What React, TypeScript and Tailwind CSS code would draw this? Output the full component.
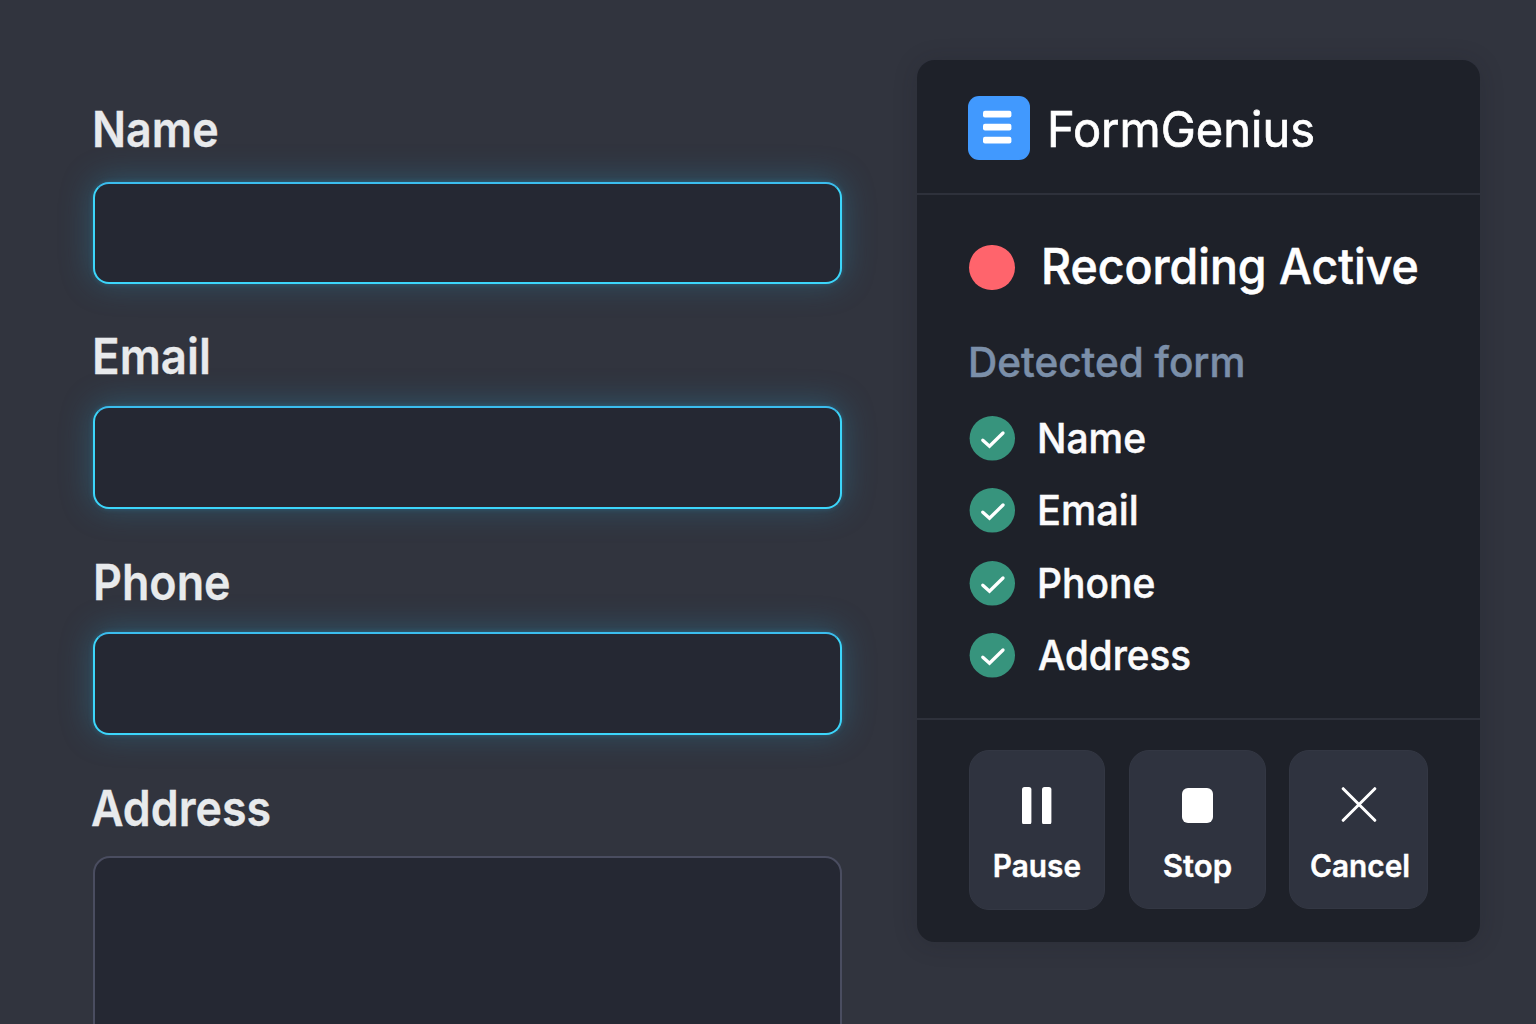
import type { ReactNode } from 'react';

type LabelProps = { children: string; className: string };

function FieldLabel({ children, className }: LabelProps) {
  return (
    <div
      className={`h-[60px] w-max shrink-0 origin-left text-[49px] leading-[60px] font-semibold text-[#e8eaec] [-webkit-text-stroke:0.3px_#e8eaec] ${className}`}
    >
      {children}
    </div>
  );
}

function ActiveInput({ className }: { className: string }) {
  return (
    <div
      className={`w-[749px] shrink-0 rounded-[16px] border-2 border-[#3cd6fb] border-t-[#3bbdee] bg-[#252833] shadow-[0_0_5px_rgba(45,150,190,0.35),0_-2px_32px_rgba(45,150,190,0.36)] ${className}`}
    />
  );
}

function DetectedItem({ children, className }: LabelProps) {
  return (
    <li className="flex h-[72.3px] items-center">
      <svg className="size-[46px] shrink-0" viewBox="0 0 46 46" fill="none">
        <ellipse cx="23.3" cy="23.3" rx="22.7" ry="22.3" fill="#37947d" />
        <path
          d="M13.8 25.2 L20.5 31.3 L34 18"
          stroke="#fff"
          strokeWidth="3.3"
          strokeLinecap="round"
          strokeLinejoin="miter"
        />
      </svg>
      <span
        className={`origin-left text-[41px] leading-[60px] font-medium text-[#fbfbfc] [-webkit-text-stroke:0.5px_#fbfbfc] ${className}`}
      >
        {children}
      </span>
    </li>
  );
}

function ActionButton({
  label,
  icon,
  className,
  labelClass,
}: {
  label: string;
  icon: ReactNode;
  className: string;
  labelClass: string;
}) {
  return (
    <button
      type="button"
      className={`flex shrink-0 flex-col items-center rounded-[20px] border border-[#333743] bg-[#2f333f] ${className}`}
    >
      <span className="mt-[35px] flex h-[38px] items-center justify-center">{icon}</span>
      <span
        className={`mt-[22px] text-[31px] leading-[40px] font-semibold text-white [-webkit-text-stroke:0.4px_#fff] ${labelClass}`}
      >
        {label}
      </span>
    </button>
  );
}

export default function App() {
  return (
    <div className="flex h-[1024px] w-[1536px] overflow-hidden bg-[#31343e] font-['Inter',sans-serif]">
      <main className="flex w-[917px] shrink-0 flex-col pt-[100px] pl-[93px]">
        <FieldLabel className="-ml-[1.3px] scale-x-[0.915]">Name</FieldLabel>
        <ActiveInput className="mt-[22px] h-[102px]" />
        <FieldLabel className="mt-[43px] -ml-[1.1px] scale-x-[0.932]">Email</FieldLabel>
        <ActiveInput className="mt-[19px] h-[103px]" />
        <FieldLabel className="mt-[44px] ml-[0.2px] scale-x-[0.915]">Phone</FieldLabel>
        <ActiveInput className="mt-[19px] h-[103px]" />
        <FieldLabel className="mt-[44px] -ml-[1.6px] scale-x-[0.913]">Address</FieldLabel>
        <div className="mt-[17px] h-[240px] w-[749px] shrink-0 rounded-[17px] border-2 border-[#4a4d60] bg-[#252833]" />
      </main>

      <aside className="mt-[60px] h-[882px] w-[563px] shrink-0 rounded-[18px] bg-[#1e2129] shadow-[0_2px_24px_rgba(24,26,34,0.2)]">
        <header className="flex h-[135px] border-b-2 border-[#2e313b] pl-[51px]">
          <svg className="mt-[36px] h-[64px] w-[62px] shrink-0" viewBox="0 0 62 64">
            <rect width="62" height="64" rx="11" fill="#4199fe" />
            <rect x="15" y="14.8" width="28.4" height="6.6" rx="2" fill="#fff" />
            <rect x="15" y="27.8" width="28.4" height="6.6" rx="2" fill="#fff" />
            <rect x="15" y="40.8" width="28.4" height="6.6" rx="2" fill="#fff" />
          </svg>
          <h1 className="mt-[40px] ml-[17px] h-[60px] origin-left scale-x-[0.96] text-[49px] leading-[60px] font-normal text-white [-webkit-text-stroke:0.7px_#fff]">
            FormGenius
          </h1>
        </header>

        <section className="h-[523px] pt-[42px] pl-[51px]">
          <div className="flex h-[60px] items-center">
            <span className="ml-[1px] h-[45px] w-[45.5px] shrink-0 rounded-full bg-[#ff646c]" />
            <span className="ml-[26px] origin-left scale-x-[0.947] text-[49px] leading-[60px] font-medium whitespace-nowrap text-white [-webkit-text-stroke:0.6px_#fff]">
              Recording Active
            </span>
          </div>
          <h2 className="mt-[35px] ml-[0.3px] h-[60px] w-max origin-left scale-x-[0.976] text-[41.5px] leading-[60px] font-medium text-[#7b8fa9] [-webkit-text-stroke:0.5px_#7b8fa9]">
            Detected form
          </h2>
          <ul className="mt-[10px] pl-[1.3px]">
            <DetectedItem className="ml-[21.7px] scale-x-[0.95]">Name</DetectedItem>
            <DetectedItem className="ml-[21.7px] scale-x-[0.968]">Email</DetectedItem>
            <DetectedItem className="ml-[21.7px] scale-x-[0.95]">Phone</DetectedItem>
            <DetectedItem className="ml-[22.3px] scale-x-[0.94]">Address</DetectedItem>
          </ul>
        </section>

        <footer className="flex h-[224px] border-t-2 border-[#2e313b] pt-[30px] pl-[52px]">
          <ActionButton
            label="Pause"
            className="h-[160px] w-[136px]"
            labelClass="scale-x-[0.96]"
            icon={
              <svg width="30" height="38" viewBox="0 0 30 38" fill="#fff">
                <rect x="0" y="1" width="9.4" height="37.5" rx="2.5" />
                <rect x="20" y="1" width="9.4" height="37.5" rx="2.5" />
              </svg>
            }
          />
          <ActionButton
            label="Stop"
            className="ml-[24px] h-[159px] w-[137px]"
            labelClass="ml-[1px] scale-x-[1.005]"
            icon={<span className="mr-[1px] h-[35px] w-[31px] rounded-[6px] bg-white" />}
          />
          <ActionButton
            label="Cancel"
            className="ml-[23px] h-[159px] w-[139px]"
            labelClass="ml-[3px] scale-x-[0.96]"
            icon={
              <svg width="36" height="36" viewBox="0 0 36 36" stroke="#fff" strokeWidth="3" strokeLinecap="round">
                <path d="M2.2 1.7 L33.8 33.3 M33.8 1.7 L2.2 33.3" />
              </svg>
            }
          />
        </footer>
      </aside>
    </div>
  );
}
